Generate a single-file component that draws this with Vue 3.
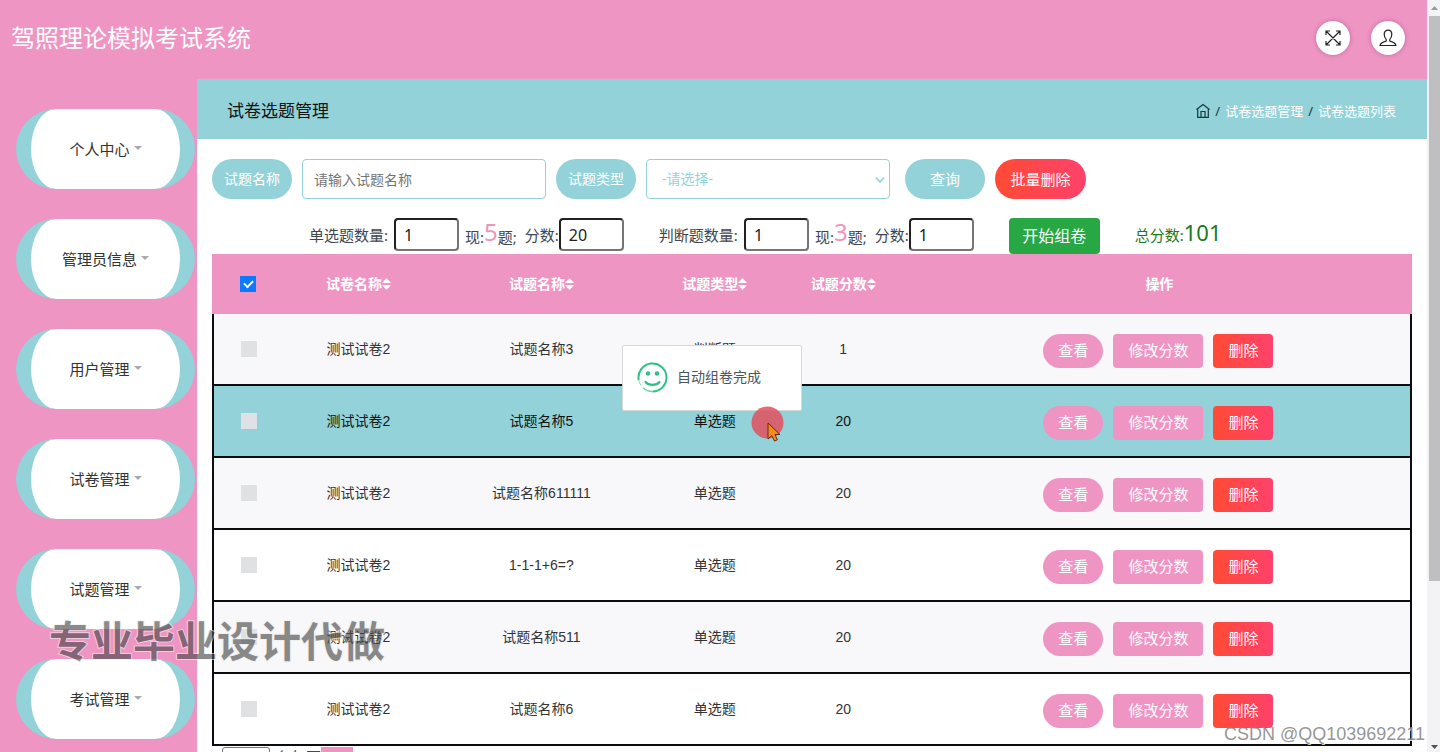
<script setup>
import { ref } from 'vue'

const menu = ['个人中心', '管理员信息', '用户管理', '试卷管理', '试题管理', '考试管理']
const columns = ['试卷名称', '试题名称', '试题类型', '试题分数']
const rows = [
  { paper: '测试试卷2', name: '试题名称3', type: '判断题', score: 1 },
  { paper: '测试试卷2', name: '试题名称5', type: '单选题', score: 20, active: true },
  { paper: '测试试卷2', name: '试题名称611111', type: '单选题', score: 20 },
  { paper: '测试试卷2', name: '1-1-1+6=?', type: '单选题', score: 20 },
  { paper: '测试试卷2', name: '试题名称511', type: '单选题', score: 20 },
  { paper: '测试试卷2', name: '试题名称6', type: '单选题', score: 20 },
]
const allChecked = ref(true)
const singleCount = ref('1')
const singleScore = ref('20')
const judgeCount = ref('1')
const judgeScore = ref('1')
</script>

<template>
  <div class="window">
    <div class="page">
      <header class="top">
        <h1>驾照理论模拟考试系统</h1>
        <div class="tools">
          <button class="round" type="button" aria-label="全屏">
            <svg width="18" height="18" viewBox="0 0 18 18" fill="none" stroke="#222" stroke-width="1.2">
              <path d="M2.5 2.5 15.5 15.5M15.5 2.5 2.5 15.5M2 6V2H6M12 2H16V6M16 12V16H12M6 16H2V12" />
            </svg>
          </button>
          <button class="round" type="button" aria-label="用户">
            <svg width="18" height="18" viewBox="0 0 18 18" fill="none" stroke="#222" stroke-width="1.2" stroke-linejoin="round">
              <path d="M7.200 10.400C5.700 9 5.200 7.300 5.200 5.300 5.200 2.700 6.800 1.200 9 1.200S12.800 2.700 12.800 5.300C12.800 7.300 12.300 9 10.800 10.400V12C13.500 12.700 16.500 13.400 17 16.500H1C1.500 13.400 4.500 12.700 7.200 12Z" />
            </svg>
          </button>
        </div>
      </header>

      <div class="body">
        <nav class="side">
          <a v-for="m in menu" :key="m" href="#" class="item">{{ m }}<i class="caret"></i></a>
        </nav>

        <main>
          <div class="crumbbar">
            <h2>试卷选题管理</h2>
            <div class="crumbs">
              <a href="#" aria-label="首页">
                <svg width="14" height="16" viewBox="0 0 14 16" fill="none" stroke="#17393d" stroke-width="1.2">
                  <path d="M.5 6.500 7 1.500 13.500 6.500M1.700 5.800V14.400H12.300V5.800M5 14V8.500H9V14" />
                </svg>
              </a>
              <span>/</span><a href="#">试卷选题管理</a><span>/</span><a href="#">试卷选题列表</a>
            </div>
          </div>

          <div class="content">
            <form class="search" @submit.prevent>
              <label class="pill" for="qname">试题名称</label>
              <input id="qname" class="field" type="text" placeholder="请输入试题名称" />
              <label class="pill" for="qtype">试题类型</label>
              <span class="selectbox">
                <select id="qtype" class="field"><option>-请选择-</option></select>
                <svg width="10" height="8" viewBox="0 0 10 8" fill="none" stroke="#93d2d8" stroke-width="1.600"><path d="M1 1.500 5 6 9 1.500" /></svg>
              </span>
              <button class="pill query" type="submit">查询</button>
              <button class="pill remove" type="button">批量删除</button>
            </form>

            <div class="compose">
              <div class="group">
                <label for="sc">单选题数量:</label>
                <input id="sc" v-model="singleCount" type="text" class="count" />
                <span>现:<b>5</b>题;</span>
                <label for="ss" class="score">分数:</label>
                <input id="ss" v-model="singleScore" type="text" />
              </div>
              <div class="group">
                <label for="jc">判断题数量:</label>
                <input id="jc" v-model="judgeCount" type="text" class="count" />
                <span>现:<b>3</b>题;</span>
                <label for="js" class="score">分数:</label>
                <input id="js" v-model="judgeScore" type="text" />
              </div>
              <button type="button" class="start">开始组卷</button>
              <p class="total">总分数:<b>101</b></p>
            </div>

            <table>
              <colgroup>
                <col class="c1" /><col class="c2" /><col class="c3" /><col class="c4" /><col class="c5" /><col />
              </colgroup>
              <thead>
                <tr>
                  <th><input v-model="allChecked" type="checkbox" aria-label="全选" /></th>
                  <th v-for="c in columns" :key="c">
                    <span class="sort">{{ c }}<svg width="9" height="12" viewBox="0 0 9 12" fill="#fff"><path d="M0 5 4.500 0 9 5ZM0 7H9L4.500 12Z" /></svg></span>
                  </th>
                  <th>操作</th>
                </tr>
              </thead>
              <tbody>
                <tr v-for="(r, i) in rows" :key="i" :class="{ active: r.active }">
                  <td><input type="checkbox" :aria-label="r.name" disabled /></td>
                  <td>{{ r.paper }}</td>
                  <td>{{ r.name }}</td>
                  <td>{{ r.type }}</td>
                  <td>{{ r.score }}</td>
                  <td>
                    <div class="ops">
                      <button type="button" class="view">查看</button>
                      <button type="button">修改分数</button>
                      <button type="button" class="del">删除</button>
                    </div>
                  </td>
                </tr>
              </tbody>
            </table>

            <div class="pager">
              <select id="size"><option>10</option></select>
              <label for="size">条每页</label>
              <button type="button" aria-label="上一页"></button>
            </div>
          </div>
        </main>
      </div>
    </div>

    <div class="scroll">
      <svg width="7" height="4" viewBox="0 0 7 4" fill="#999"><path d="M0 4 3.500 0 7 4Z" /></svg>
      <div class="thumb"></div>
      <svg class="down" width="7" height="4" viewBox="0 0 7 4" fill="#505050"><path d="M0 0H7L3.500 4Z" /></svg>
    </div>

    <div class="toast" role="status">
      <svg width="31" height="31" viewBox="0 0 31 31" fill="none" stroke="#31c085" stroke-width="2">
        <path d="M1.700 18A14 14 0 1 1 15.500 29.500" />
        <path d="M15.500 29.500A14 14 0 0 1 6 25.800" stroke="#6fd3aa" stroke-width="1.400" />
        <path d="M1.700 18A14 14 0 0 0 4 23.500" stroke="#8fdcbd" stroke-width="1" />
        <path d="M8.500 20C11.500 23.700 19.500 23.700 22.500 20" stroke-width="2.200" stroke-linecap="round" />
        <circle cx="11" cy="11.500" r="2.300" fill="#31c085" stroke="none" />
        <circle cx="20" cy="11.500" r="2.300" fill="#31c085" stroke="none" />
      </svg>
      <span>自动组卷完成</span>
    </div>

    <div class="pointer">
      <svg width="36" height="36" viewBox="0 0 36 36">
        <circle cx="16.500" cy="16.500" r="16" fill="#e0505e" fill-opacity=".85" />
        <path d="M17 17V33L20.800 29.700 23.500 35 26.300 33.800 24 28.500H29Z" fill="#f58a1c" stroke="#6b2412" />
      </svg>
    </div>

    <div class="mark">专业毕业设计代做</div>
    <div class="credit">CSDN @QQ1039692211</div>
  </div>
</template>

<style>
body {
  margin: 0;
}
</style>

<style scoped>
* {
  box-sizing: border-box;
}
.window {
  position: relative;
  display: flex;
  height: 100vh;
  overflow: hidden;
  background: #fff;
  color: #3f4650;
  font: 15px/20px "Noto Sans", "Noto Sans CJK SC", sans-serif;
}
button,
input,
select {
  font: inherit;
  margin: 0;
}
a {
  color: inherit;
  text-decoration: none;
}
h1,
h2,
p {
  margin: 0;
  font-weight: 400;
}
b {
  font-weight: 400;
}
.page {
  flex: 1;
  min-width: 0;
  background: #ef95c4;
}
.top {
  display: flex;
  align-items: center;
  justify-content: space-between;
  height: 79px;
  padding: 0 22px 3px 11px;
}
h1 {
  color: #fff;
  font-size: 24px;
  line-height: 36px;
}
.tools {
  display: flex;
  gap: 21px;
}
.round {
  display: grid;
  place-items: center;
  width: 34px;
  height: 34px;
  padding: 0;
  border: 0;
  border-radius: 50%;
  background: #fff;
  box-shadow: 0 0 5px rgba(120, 40, 80, 0.4);
}
.body {
  display: flex;
}
.side {
  display: flex;
  flex-direction: column;
  flex: 0 0 197px;
  gap: 30px;
  padding: 30px 2px 0 16px;
}
.item {
  display: flex;
  align-items: center;
  justify-content: center;
  height: 80px;
  border: solid #93d2d8;
  border-width: 0 15px;
  border-radius: 40px;
  background: #fff;
  color: #333;
}
.caret {
  margin: 0 0 3px 4px;
  border: 4px solid transparent;
  border-top-color: #aaa;
  border-bottom: 0;
}
main {
  flex: 1;
  min-width: 0;
  background: #fff;
}
.crumbbar {
  display: flex;
  align-items: center;
  justify-content: space-between;
  height: 60px;
  padding: 4px 31px 0 30px;
  background: #93d2d8;
}
h2 {
  color: #111;
  font-size: 17px;
}
.crumbs {
  display: flex;
  align-items: center;
  gap: 5px;
  color: #fff;
  font-size: 13px;
}
.crumbs span {
  color: #17393d;
}
.crumbs svg {
  display: block;
}
.content {
  padding: 20px 15px 30px;
}
.search {
  display: flex;
  gap: 10px;
}
.pill {
  width: 80px;
  height: 40px;
  padding: 0;
  border: 0;
  border-radius: 20px;
  background: #93d2d8;
  color: #fff;
  font-size: 14px;
  line-height: 40px;
  text-align: center;
}
.field {
  width: 244px;
  height: 40px;
  padding: 0 11px;
  border: 1px solid #93d2d8;
  border-radius: 4px;
  background: #fff;
  font-size: 14px;
}
.field::placeholder {
  color: #757575;
  opacity: 1;
}
.selectbox {
  position: relative;
}
.selectbox select {
  padding-left: 15px;
  appearance: none;
  color: #93d2d8;
}
.selectbox svg {
  position: absolute;
  right: 5px;
  top: 17px;
}
.query {
  margin-left: 5px;
  font-size: 15px;
}
.remove {
  width: 91px;
  font-size: 15px;
}
.remove,
.ops .del {
  background: linear-gradient(to right, #ff4b35, #ff416c);
}
.compose {
  display: flex;
  height: 36px;
  margin-top: 19px;
  padding-left: 97px;
}
.group {
  display: flex;
  align-items: center;
  height: 33px;
  margin-right: 35px;
  white-space: nowrap;
}
.group input {
  width: 65px;
  height: 33px;
  padding: 0 8px;
  border: 2px solid #222;
  border-right-color: #767676;
  border-bottom-color: #767676;
  border-radius: 4px;
  background: #fff;
  color: #222;
  font-size: 16px;
}
.group .count {
  margin: 0 6px;
}
.group .score {
  margin-left: 8px;
}
.group b {
  color: #ef95b8;
  font-size: 24px;
  vertical-align: 2px;
}
.start {
  width: 91px;
  padding: 0;
  border: 0;
  border-radius: 4px;
  background: #28a745;
  color: #fff;
  font-size: 16px;
}
.total {
  margin-left: 35px;
  color: #1b7a1b;
  line-height: 28px;
}
.total b {
  font-size: 22px;
}
table {
  width: 100%;
  border-spacing: 0;
  table-layout: fixed;
  font: 14px/20px "Liberation Sans", "Noto Sans CJK SC", sans-serif;
  color: #333;
  text-align: center;
}
.c1 {
  width: 6%;
}
.c2 {
  width: 12.4%;
}
.c3 {
  width: 18.1%;
}
.c4 {
  width: 10.8%;
}
.c5 {
  width: 10.6%;
}
th {
  height: 60px;
  padding: 0;
  background: #ef95c4;
  color: #fff;
}
.sort {
  display: inline-flex;
  align-items: center;
}
td {
  height: 72px;
  padding: 0;
  border-bottom: 2px solid #0c0c10;
}
td:first-child {
  border-left: 2px solid #0c0c10;
}
td:last-child {
  border-right: 2px solid #0c0c10;
}
tbody tr:nth-child(odd) {
  background: #f8f8fa;
}
tbody tr.active {
  background: #93d2d8;
  color: #111;
}
table input {
  display: block;
  width: 16px;
  height: 16px;
  margin: 0 auto;
  appearance: none;
  background: #dfe1e5;
}
table input:checked {
  display: grid;
  place-items: center;
  background: #0a7aff;
}
table input:checked::after {
  content: "";
  width: 7px;
  height: 4px;
  margin-bottom: 2px;
  border: solid #fff;
  border-width: 0 0 2px 2px;
  rotate: -45deg;
}
.ops {
  display: flex;
  justify-content: center;
  gap: 10px;
  padding-top: 4px;
}
.ops button {
  height: 34px;
  padding: 0 15px;
  border: 0;
  border-radius: 4px;
  background: #ef95c4;
  color: #fff;
  font-size: 15px;
}
.ops .view {
  border-radius: 17px;
}
.pager {
  display: flex;
  gap: 6px;
  padding-left: 10px;
  margin-top: 1px;
}
.pager select {
  width: 48px;
  height: 24px;
  padding: 0 6px;
  border: 1px solid #767676;
  border-radius: 3px;
  appearance: none;
  background: #fff;
  color: #222;
  line-height: 18px;
}
.pager button {
  width: 32px;
  height: 30px;
  margin-left: -6px;
  border: 0;
  background: #ef95c4;
}
.scroll {
  display: flex;
  flex-direction: column;
  align-items: center;
  flex: 0 0 13px;
  padding: 6px 0 3px 2px;
  background: #f3f3f5;
}
.thumb {
  width: 100%;
  height: 76%;
  margin-top: 6px;
  background: #bfbfc1;
}
.scroll svg {
  flex: none;
}
.down {
  margin-top: auto;
}
.toast {
  position: absolute;
  left: calc(50% - 98px);
  top: 345px;
  display: flex;
  align-items: center;
  gap: 9px;
  width: 180px;
  height: 66px;
  padding: 0 0 2px 14px;
  border: 1px solid #d5d9dc;
  border-radius: 2px;
  background: #fff;
  color: #4a5560;
  font-size: 14px;
}
.pointer {
  position: absolute;
  left: 751px;
  top: 406px;
}
.mark {
  position: absolute;
  left: 49px;
  top: 609px;
  color: #4a4a4a;
  opacity: 0.64;
  font: 700 42px/60px "Noto Sans CJK SC", sans-serif;
  -webkit-text-stroke: 2px #eee;
  paint-order: stroke fill;
}
.credit {
  position: absolute;
  right: 15px;
  bottom: 6px;
  color: rgba(130, 130, 130, 0.85);
  font: 18px/24px "Liberation Sans", sans-serif;
  text-shadow: 1px 1px 0 rgba(255, 255, 255, 0.8);
}
</style>
